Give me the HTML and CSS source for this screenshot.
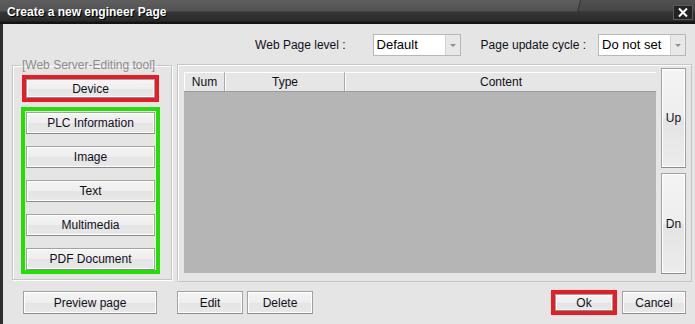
FILE: index.html
```html
<!DOCTYPE html>
<html lang="en">
<head>
    <meta charset="UTF-8">
    <meta name="viewport" content="width=device-width, initial-scale=1.0">
    <title>Create a new engineer Page</title>
    <link rel="stylesheet" href="styles.css">
</head>
<body>
    <div class="window">
        <div class="titlebar">
            <span class="title">Create a new engineer Page</span>
            <span class="close">
                <svg width="18" height="13" viewBox="0 0 18 13">
                    <path d="M5 2.5 L13 10.5 M13 2.5 L5 10.5" stroke="#fff" stroke-width="2" fill="none"/>
                </svg>
            </span>
        </div>

        <div class="content">
            <div class="toprow">
                <span class="label label-level">Web Page level :</span>
                <div class="select">
                    <span class="select-value">Default</span>
                    <span class="select-arrow"></span>
                </div>
                <span class="label label-cycle">Page update cycle :</span>
                <div class="select">
                    <span class="select-value">Do not set</span>
                    <span class="select-arrow"></span>
                </div>
            </div>

            <div class="main">
                <fieldset class="tools">
                    <legend>[Web Server-Editing tool]</legend>
                    <div class="mark mark-red device-box">
                        <button class="btn btn-device">Device</button>
                    </div>
                    <div class="mark mark-green tool-list">
                        <button class="btn btn-tool">PLC Information</button>
                        <button class="btn btn-tool">Image</button>
                        <button class="btn btn-tool">Text</button>
                        <button class="btn btn-tool">Multimedia</button>
                        <button class="btn btn-tool">PDF Document</button>
                    </div>
                </fieldset>

                <div class="panel">
                    <div class="list">
                        <div class="list-head">
                            <div class="col col-num">Num</div>
                            <div class="col col-type">Type</div>
                            <div class="col col-content">Content</div>
                        </div>
                        <div class="list-body"></div>
                    </div>
                    <div class="order">
                        <button class="btn btn-up">Up</button>
                        <button class="btn btn-dn">Dn</button>
                    </div>
                </div>
            </div>

            <div class="bottom">
                <button class="btn btn-preview">Preview page</button>
                <button class="btn btn-small btn-edit">Edit</button>
                <button class="btn btn-small">Delete</button>
                <div class="mark mark-red ok-box">
                    <button class="btn btn-ok">Ok</button>
                </div>
                <button class="btn btn-cancel">Cancel</button>
            </div>
        </div>
    </div>
</body>
</html>
```

FILE: styles.css
```css
*{
    box-sizing: border-box;
}
body{
    margin: 0;
    width: 695px;
    height: 324px;
    overflow: hidden;
    font-family: "Liberation Sans", Arial, sans-serif;
    font-size: 12px;
    color: #10101a;
    background-color: #e5e5e5;
}
.window{
    display: flex;
    flex-direction: column;
    height: 324px;
}

/* title bar */
.titlebar{
    position: relative;
    height: 24px;
    display: flex;
    align-items: flex-start;
    background: linear-gradient(#5e5e5e 0, #525252 11px, #363636 12px, #2a2a2a 21px, #141414 22px, #111 24px);
    overflow: hidden;
}
.titlebar::after{
    content: "";
    position: absolute;
    top: 0;
    left: 580px;
    width: 200px;
    height: 12px;
    background: rgba(0, 0, 0, 0.14);
    border-left: 1px solid #333;
    transform: skewX(-14deg);
    transform-origin: top left;
}
.title{
    margin: 5px 0 0 7px;
    color: #fff;
    font-weight: bold;
    font-size: 12px;
    line-height: 14px;
    text-shadow: 1px 1px 0 #000;
}
.close{
    position: relative;
    z-index: 1;
    margin: 5px 2px 0 auto;
    width: 20px;
    height: 15px;
    background-color: #232323;
    border: 1px solid #5c5c5c;
    display: flex;
    align-items: center;
    justify-content: center;
}

/* body */
.content{
    flex: 1;
    border-left: 3px solid #2e2e2e;
    background-color: #e5e5e5;
    display: flex;
    flex-direction: column;
}
.toprow{
    display: flex;
    align-items: center;
    justify-content: flex-end;
    height: 22px;
    margin-top: 10px;
    padding-right: 9px;
}
.label{
    line-height: 14px;
}
.label-level{
    margin-right: 27px;
}
.label-cycle{
    margin-left: 20px;
    margin-right: 12px;
}
.select{
    width: 88px;
    height: 22px;
    display: flex;
    border: 1px solid #b8b8b8;
    background-color: #fff;
}
.select-value{
    flex: 1;
    padding-left: 3px;
    line-height: 20px;
    font-size: 13px;
    color: #000;
}
.select-arrow{
    width: 15px;
    background-color: #e8e8e8;
    border-left: 1px solid #d2d2d2;
    display: flex;
    align-items: center;
    justify-content: center;
}
.select-arrow::before{
    content: "";
    border-left: 3px solid transparent;
    border-right: 3px solid transparent;
    border-top: 3px solid #8e8e8e;
}

/* main area */
.main{
    display: flex;
    align-items: flex-start;
    margin-top: 2px;
}
.tools{
    margin: 0 0 0 9px;
    width: 158px;
    padding: 3px 12px 5px 9px;
    border: 1px solid #c6c6c6;
    box-shadow: 1px 1px 0 #fff, inset 1px 1px 0 #fff;
}
.tools legend{
    padding: 0 1px;
    margin-left: -1px;
    line-height: 14px;
    color: #8c8c8c;
}
.mark{
    border: 4px solid;
}
.mark-red{
    border-color: #e81c24;
}
.mark-green{
    border-color: #24e000;
}
.device-box{
    height: 27px;
}
.tool-list{
    margin: 5px -1px 0 -1px;
    padding-top: 1px;
    display: flex;
    flex-direction: column;
    gap: 12px;
}

.btn{
    display: flex;
    align-items: center;
    justify-content: center;
    padding: 0;
    font-family: "Liberation Sans", Arial, sans-serif;
    font-size: 12px;
    color: #10101a;
    border: 1px solid #a2a2a2;
    border-bottom-color: #8a8a8a;
    border-radius: 0;
    box-shadow: inset 1px 1px 0 #fff, inset -1px -1px 0 #fff;
    background: linear-gradient(#f4f4f4, #eeeeee 50%, #e4e4e4 51%, #e9e9e9);
}
.btn-device{
    width: 129px;
    height: 19px;
}
.btn-tool{
    width: 129px;
    height: 22px;
    margin-left: 1px;
}

/* list panel */
.panel{
    margin: 6px 0 0 5px;
    width: 515px;
    height: 218px;
    display: flex;
    align-items: flex-start;
    padding: 7px 5px 0 6px;
    border: 1px solid #c6c6c6;
    box-shadow: inset 1px 1px 0 #fff;
}
.list{
    width: 472px;
    height: 201px;
    display: flex;
    flex-direction: column;
}
.list-head{
    display: flex;
    height: 20px;
    background-color: #e6e6e6;
    border-bottom: 1px solid #9c9c9c;
}
.col{
    display: flex;
    align-items: center;
    justify-content: center;
    border-top: 1px solid #fff;
    border-left: 1px solid #fff;
    border-right: 1px solid #a8a8a8;
    font-size: 12px;
}
.col-num{
    width: 41px;
}
.col-type{
    width: 120px;
}
.col-content{
    flex: 1;
    border-right: none;
}
.list-body{
    flex: 1;
    background-color: #b5b5b5;
}
.order{
    margin: -4px 0 0 5px;
    display: flex;
    flex-direction: column;
    gap: 5px;
}
.btn-up,
.btn-dn{
    width: 25px;
    background: linear-gradient(#f4f4f4, #eeeeee 50%, #e4e4e4 51%, #ececec);
}
.btn-up{
    height: 100px;
}
.btn-dn{
    height: 101px;
}

/* bottom buttons */
.bottom{
    display: flex;
    align-items: center;
    height: 25px;
    margin-top: 8px;
    padding: 0 9px 0 20px;
}
.btn-preview{
    width: 134px;
    height: 23px;
}
.btn-small{
    width: 66px;
    height: 23px;
    margin-left: 4px;
}
.btn-edit{
    margin-left: 20px;
}
.ok-box{
    margin-left: auto;
    width: 66px;
    height: 25px;
}
.btn-ok{
    width: 58px;
    height: 17px;
}
.btn-cancel{
    width: 64px;
    height: 23px;
    margin-left: 5px;
}
```
